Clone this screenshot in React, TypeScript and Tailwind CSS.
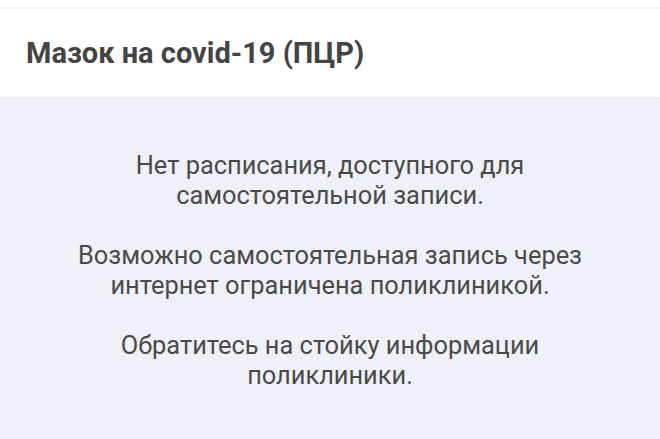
import React from 'react';

const paragraphs = [
  ['Нет расписания, доступного для', 'самостоятельной записи.'],
  ['Возможно самостоятельная запись через', 'интернет ограничена поликлиникой.'],
  ['Обратитесь на стойку информации', 'поликлиники.'],
];

export default function App() {
  return (
    <div className="w-[660px] h-[439px] flex flex-col bg-[#f0f0f8] font-['Roboto','Noto_Sans',sans-serif] overflow-hidden">
      <div className="h-[7px] bg-white" />
      <div className="h-[2px] bg-[#f1f1f3]" />
      <div className="h-[88px] bg-white flex items-center px-[26px]">
        <h1 className="text-[29px] font-bold text-[#444444] leading-none">Мазок на covid-19 (ПЦР)</h1>
      </div>
      <div className="flex flex-col items-center gap-[30px] pt-[53px] text-[25.4px] leading-[30px] text-[#4a4a4a] text-center">
        {paragraphs.map((lines, i) => (
          <p key={i}>
            {lines.map((l, j) => (
              <span key={j} className="block">{l}</span>
            ))}
          </p>
        ))}
      </div>
    </div>
  );
}
